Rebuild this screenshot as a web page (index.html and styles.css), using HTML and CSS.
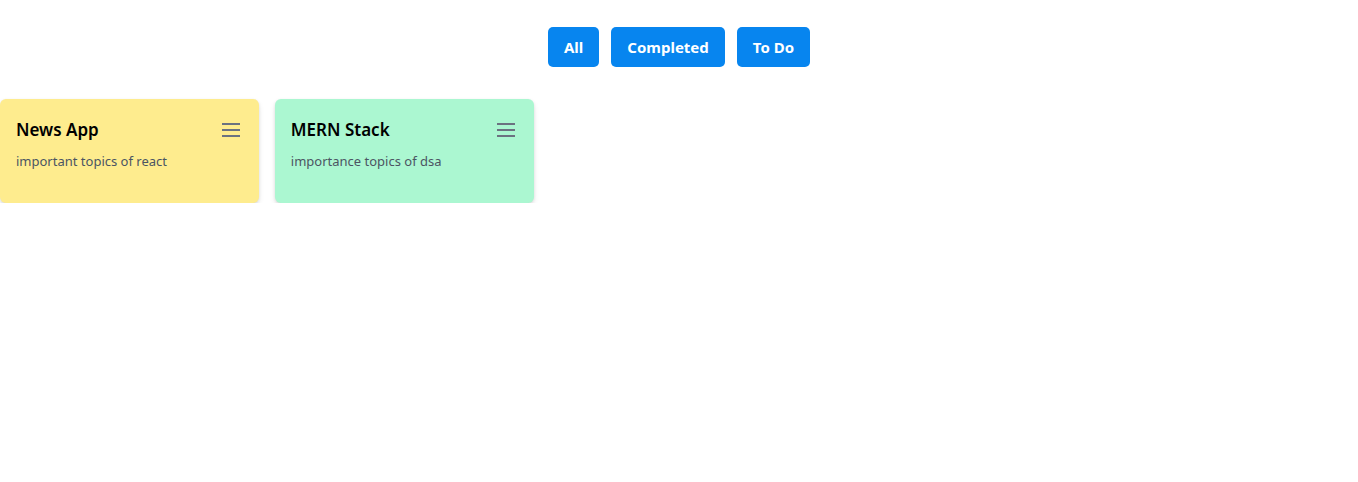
FILE: index.html
```html
<!DOCTYPE html>
<html>
<head>
<meta charset="utf-8">
<link rel="stylesheet" href="styles.css">
</head>
<body>
<div class="filters">
  <button class="btn">All</button>
  <button class="btn">Completed</button>
  <button class="btn">To Do</button>
</div>
<div class="grid">
  <div class="card yellow">
    <div class="card-head">
      <h3 class="title">News App</h3>
      <svg class="menu" width="20" height="16" viewBox="0 0 20 16"><path d="M1 2h18M1 8h18M1 14h18" stroke="#6b7280" stroke-width="2" fill="none"/></svg>
    </div>
    <p class="desc">important topics of react</p>
  </div>
  <div class="card green">
    <div class="card-head">
      <h3 class="title">MERN Stack</h3>
      <svg class="menu" width="20" height="16" viewBox="0 0 20 16"><path d="M1 2h18M1 8h18M1 14h18" stroke="#6b7280" stroke-width="2" fill="none"/></svg>
    </div>
    <p class="desc">importance topics of dsa</p>
  </div>
</div>
</body>
</html>
```
FILE: styles.css
```css
body {
  margin: 0;
  font-family: "Noto Sans", "Open Sans", sans-serif;
  background: #fff;
}
.filters {
  display: flex;
  justify-content: center;
  gap: 12px;
  padding-top: 27px;
}
.btn {
  height: 40px;
  padding: 0 16px;
  border: none;
  border-radius: 5px;
  background: #0785ef;
  color: #fff;
  font-family: inherit;
  font-weight: 700;
  font-size: 15px;
}
.grid {
  display: grid;
  grid-template-columns: repeat(5, 1fr);
  gap: 16px;
  margin-top: 32px;
}
.card {
  border-radius: 6px;
  padding: 17px 16px 16px;
  min-height: 104px;
  box-sizing: border-box;
  box-shadow: 0 3px 6px -1px rgba(0,0,0,0.14), 0 1px 3px rgba(0,0,0,0.08);
}
.yellow { background: #feec8e; }
.green { background: #abf7d1; }
.card-head {
  display: flex;
  justify-content: space-between;
  align-items: center;
}
.title {
  margin: 0;
  font-size: 17px;
  font-weight: 600;
  line-height: 28px;
  color: #000;
}
.menu { margin-right: 2px; }
.desc {
  margin: 7px 0 0;
  font-size: 13px;
  line-height: 20px;
  color: #4b5563;
}
```
